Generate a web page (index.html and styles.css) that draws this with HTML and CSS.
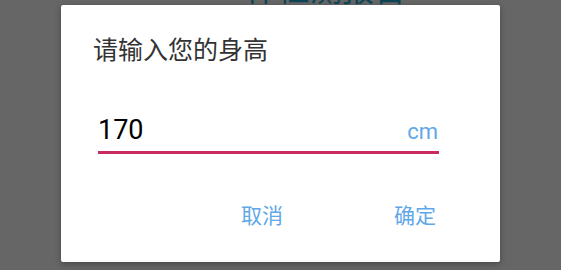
FILE: index.html
```html
<!DOCTYPE html>
<html lang="zh">
<head>
<meta charset="utf-8">
<link rel="stylesheet" href="styles.css">
</head>
<body>
<div class="page">
  <div class="header">一体检测报告</div>
</div>
<div class="dialog">
  <div class="title">请输入您的身高</div>
  <div class="field">
    <span class="value">170</span>
    <span class="unit">cm</span>
  </div>
  <div class="actions">
    <span class="btn">取消</span>
    <span class="btn">确定</span>
  </div>
</div>
</body>
</html>
```
FILE: styles.css
```css
html, body {
  margin: 0;
  padding: 0;
}
body {
  width: 561px;
  height: 270px;
  background: #666666;
  overflow: hidden;
  position: relative;
  font-family: "Noto Sans CJK SC", "Noto Sans", sans-serif;
}
.page {
  padding-left: 214px;
}
.header {
  margin-top: -33px;
  font-size: 32px;
  line-height: 40px;
  color: #0e4658;
  white-space: nowrap;
}
.dialog {
  position: absolute;
  left: 61px;
  top: 5px;
  width: 439px;
  height: 257px;
  background: #ffffff;
  border-radius: 2px;
  box-shadow: 0 2px 6px rgba(0,0,0,0.3);
  display: flex;
  flex-direction: column;
  box-sizing: border-box;
  padding-top: 27px;
}
.title {
  padding-left: 32px;
  font-size: 25px;
  line-height: 33px;
  color: #333333;
}
.field {
  margin: 47px 61px 0 37px;
  display: flex;
  align-items: baseline;
  justify-content: space-between;
  border-bottom: 3px solid #c92a62;
  padding-bottom: 3px;
  font-family: Roboto, "Noto Sans", sans-serif;
}
.value {
  font-size: 27px;
  line-height: 36px;
  color: #000000;
}
.unit {
  font-size: 22px;
  color: #5fa8e8;
  padding-right: 1px;
}
.actions {
  margin-top: 46px;
  display: flex;
  justify-content: flex-end;
  gap: 111px;
  padding-right: 64px;
}
.btn {
  font-size: 21px;
  line-height: 28px;
  color: #5fa8e8;
}
```
